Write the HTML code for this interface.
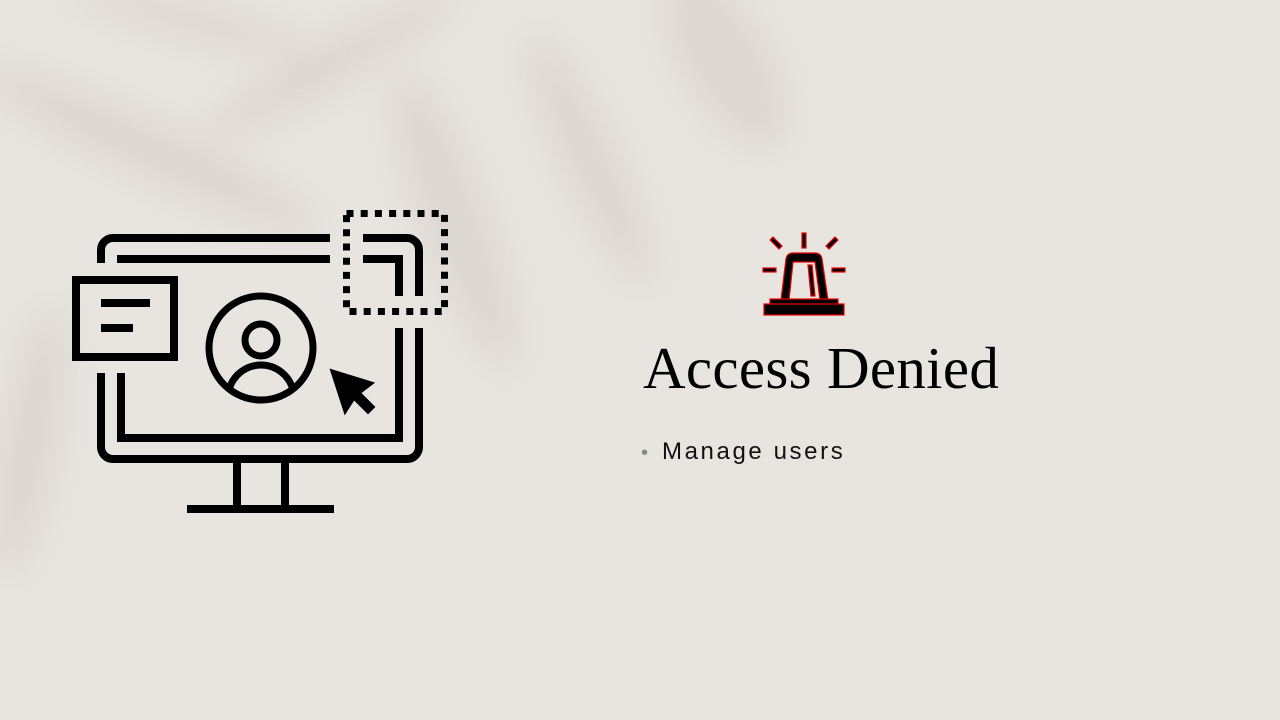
<!DOCTYPE html>
<html><head><meta charset="utf-8"><style>
html,body{margin:0;padding:0}
body{width:1280px;height:720px;overflow:hidden;background:#e8e5e0;position:relative;font-family:"Liberation Sans",sans-serif}
.sh{position:absolute;background:#d3cbc7;filter:blur(18px);opacity:.55;border-radius:50%}
h1{position:absolute;left:643px;top:333px;margin:0;font-family:"Liberation Serif",serif;font-weight:normal;font-size:59px;line-height:70px;color:#000;white-space:nowrap;letter-spacing:0.3px}
.b{position:absolute;left:641px;top:436px;font-size:24px;line-height:32px;color:#111;letter-spacing:2.6px;white-space:nowrap}
.b span{color:#7f9075;margin-right:14px;font-size:20px;letter-spacing:0}
</style></head><body>
<div class="sh" style="left:-40px;top:120px;width:380px;height:60px;transform:rotate(25deg)"></div>
<div class="sh" style="left:180px;top:40px;width:300px;height:50px;transform:rotate(-30deg)"></div>
<div class="sh" style="left:420px;top:60px;width:70px;height:320px;transform:rotate(-20deg)"></div>
<div class="sh" style="left:560px;top:20px;width:60px;height:280px;transform:rotate(-25deg)"></div>
<div class="sh" style="left:680px;top:-40px;width:90px;height:200px;transform:rotate(-30deg)"></div>
<div class="sh" style="left:0px;top:300px;width:60px;height:280px;transform:rotate(10deg)"></div>
<div class="sh" style="left:60px;top:0px;width:260px;height:40px;transform:rotate(15deg)"></div>
<svg width="1280" height="720" style="position:absolute;left:0;top:0" fill="none" stroke="#000" stroke-width="8">
<path d="M101 263V250a12 12 0 0 1 12-12H330M363 238H407a12 12 0 0 1 12 12V296M419 328V447a12 12 0 0 1-12 12H113a12 12 0 0 1-12-12V373"/>
<path d="M117 259H330M363 259H399V296M399 328V438H121V373"/>
<rect x="76" y="280" width="98" height="77"/>
<path d="M101 303H150M101 328H133"/>
<rect x="346.5" y="213.5" width="98" height="98" stroke-width="7" stroke-dasharray="7 7.2"/>
<circle cx="261" cy="348" r="52" stroke-width="7"/>
<circle cx="261" cy="340" r="16" stroke-width="7"/>
<path d="M229 390a33 33 0 0 1 64 0" stroke-width="7"/>
<path d="M331 370L345 413L354 399L368 413L374 407L360 393L373 383Z" fill="#000" stroke-width="2"/>
<path d="M237 463V509M285 463V509M187 509H334"/>
<g stroke="#e00" stroke-width="1.2" fill="#000">
<path d="M781 300L786 259Q787 253 793 253H815Q821 253 822 259L828 300Z M789 300L793 262H815L820 300Z" fill-rule="evenodd"/>
<rect x="770" y="299" width="68" height="6"/>
<rect x="764" y="304" width="80" height="11"/>
<rect x="802" y="233" width="4" height="15"/>
<rect x="763" y="268" width="13" height="4"/>
<rect x="832" y="268" width="13" height="4"/>
<path d="M770 240L773 237L782 246L779 249Z M838 240L835 237L826 246L829 249Z"/>
<path d="M808 265L812 265L815 296L811 296Z"/>
</g>
</svg>
<h1>Access Denied</h1>
<div class="b"><span>•</span>Manage users</div>
</body></html>
